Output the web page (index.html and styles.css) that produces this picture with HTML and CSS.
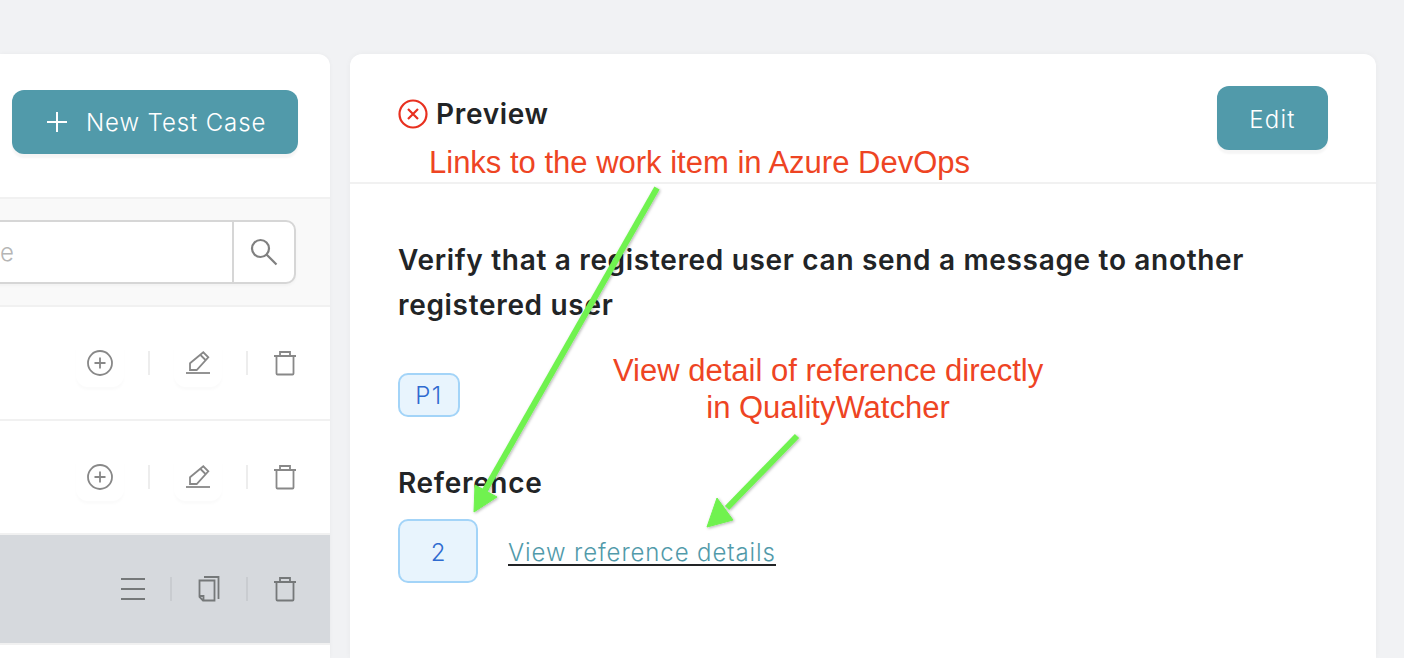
FILE: index.html
```html
<!DOCTYPE html>
<html lang="en">
<head>
    <meta charset="UTF-8">
    <meta name="viewport" content="width=device-width, initial-scale=1.0">
    <title>Test Cases</title>
    <link rel="stylesheet" href="styles.css">
</head>
<body>
    <div class="page">
        <!-- Test case list -->
        <section class="list-panel">
            <div class="list-head">
                <button class="btn-new">
                    <svg width="20" height="20" viewBox="0 0 20 20"><path d="M10 0v20M0 10h20" stroke="#fff" stroke-width="2" fill="none"/></svg>
                    <span>New Test Case</span>
                </button>
            </div>
            <div class="search-row">
                <div class="search-box">
                    <input class="search-input" type="text" placeholder="Search by name">
                    <div class="search-btn">
                        <svg width="28" height="28" viewBox="0 0 28 28" fill="none" stroke="#808080" stroke-width="2.2"><circle cx="10.500" cy="10.500" r="8.500"/><path d="M16.500 16.500l10 10"/></svg>
                    </div>
                </div>
            </div>
            <div class="case-row">
                <div class="act act-wide">
                    <svg width="26" height="26" viewBox="0 0 26 26" fill="none" stroke="#888" stroke-width="1.800"><circle cx="13" cy="13" r="12"/><path d="M13 7.500v11M7.500 13h11"/></svg>
                </div>
                <i class="sep"></i>
                <div class="act act-wide">
                    <svg width="24" height="26" viewBox="0 0 24 26" fill="none" stroke="#888" stroke-width="1.800"><path d="M0 23h24"/><path d="M4 13.300L17.300 2.300l5 5L10.700 20H4z"/><path d="M14.500 5l5 5"/></svg>
                </div>
                <i class="sep"></i>
                <div class="act">
                    <svg width="24" height="26" viewBox="0 0 24 26" fill="none" stroke="#888" stroke-width="1.800"><path d="M1 6h22M7 6V2h10v4M3.500 6v17.500a1 1 0 0 0 1 1h15a1 1 0 0 0 1-1V6"/></svg>
                </div>
            </div>
            <div class="case-row">
                <div class="act act-wide">
                    <svg width="26" height="26" viewBox="0 0 26 26" fill="none" stroke="#888" stroke-width="1.800"><circle cx="13" cy="13" r="12"/><path d="M13 7.500v11M7.500 13h11"/></svg>
                </div>
                <i class="sep"></i>
                <div class="act act-wide">
                    <svg width="24" height="26" viewBox="0 0 24 26" fill="none" stroke="#888" stroke-width="1.800"><path d="M0 23h24"/><path d="M4 13.300L17.300 2.300l5 5L10.700 20H4z"/><path d="M14.500 5l5 5"/></svg>
                </div>
                <i class="sep"></i>
                <div class="act">
                    <svg width="24" height="26" viewBox="0 0 24 26" fill="none" stroke="#888" stroke-width="1.800"><path d="M1 6h22M7 6V2h10v4M3.500 6v17.500a1 1 0 0 0 1 1h15a1 1 0 0 0 1-1V6"/></svg>
                </div>
            </div>
            <div class="case-row case-active">
                <div class="act">
                    <svg width="24" height="24" viewBox="0 0 24 24" fill="none" stroke="#757879" stroke-width="2"><path d="M0 2h24M0 12h24M0 22h24"/></svg>
                </div>
                <i class="sep"></i>
                <div class="act">
                    <svg width="22" height="26" viewBox="0 0 22 26" fill="none" stroke="#757879" stroke-width="1.800"><path d="M6 1h14.500v22M16.500 4.500H1.500v16.500l3.500 3.500h11.500zM1.500 20h4v4"/></svg>
                </div>
                <i class="sep"></i>
                <div class="act">
                    <svg width="24" height="26" viewBox="0 0 24 26" fill="none" stroke="#757879" stroke-width="1.800"><path d="M1 6h22M7 6V2h10v4M3.500 6v17.500a1 1 0 0 0 1 1h15a1 1 0 0 0 1-1V6"/></svg>
                </div>
            </div>
        </section>

        <!-- Preview -->
        <section class="preview-panel">
            <div class="preview-head">
                <div class="preview-title">
                    <svg width="30" height="30" viewBox="0 0 30 30" fill="none" stroke="#e8301f" stroke-width="2.200"><circle cx="15" cy="15" r="13.500"/><path d="M10 10l10 10M20 10L10 20"/></svg>
                    <h2>Preview</h2>
                </div>
                <button class="btn-edit">Edit</button>
            </div>
            <div class="preview-body">
                <p class="case-title">Verify that a registered user can send a message to another registered user</p>
                <span class="badge">P1</span>
                <h3>Reference</h3>
                <div class="ref-row">
                    <span class="ref-num">2</span>
                    <a class="ref-link" href="#">View reference details</a>
                </div>
            </div>
        </section>
    </div>

    <!-- Annotations drawn over the screenshot -->
    <div class="note note-links">Links to the work item in Azure DevOps</div>
    <div class="note note-detail">View detail of reference directly<br>in QualityWatcher</div>
    <svg class="arrows" width="1404" height="658" viewBox="0 0 1404 658">
        <defs>
            <filter id="arrowShadow" x="-20%" y="-20%" width="140%" height="140%">
                <feDropShadow dx="1" dy="1" stdDeviation="1.500" flood-color="#000" flood-opacity="0.300"/>
            </filter>
        </defs>
        <g fill="#70f24f" stroke="#70f24f" filter="url(#arrowShadow)">
            <path d="M657 188L484 492" stroke-width="6" fill="none"/>
            <path d="M474 512l1-27 22 12z" stroke-width="1"/>
            <path d="M797 436l-70 72" stroke-width="6" fill="none"/>
            <path d="M707 527l10-29 16 22z" stroke-width="1"/>
        </g>
    </svg>
</body>
</html>
```

FILE: styles.css
```css
* {
    box-sizing: border-box;
}

body {
    margin: 0;
    height: 658px;
    overflow: hidden;
    background-color: #f1f2f4;
    font-family: 'Inter', sans-serif;
    color: #222426;
}

.page {
    display: flex;
    gap: 20px;
    height: 658px;
    padding: 54px 28px 0 0;
}

.list-panel {
    flex: 0 0 330px;
    background-color: #fff;
    border-top-right-radius: 12px;
    box-shadow: 0 0 4px rgba(0, 0, 0, 0.04);
    overflow: hidden;
}

.list-head {
    display: flex;
    justify-content: flex-end;
    align-items: center;
    height: 145px;
    padding: 0 32px 7px 0;
    border-bottom: 2px solid #f1f1f1;
}

.btn-new {
    display: flex;
    align-items: center;
    gap: 19px;
    width: 286px;
    height: 64px;
    padding: 0 0 0 35px;
    border: none;
    border-radius: 12px;
    background-color: #519aaa;
    box-shadow: 0 4px 2px rgba(0, 0, 0, 0.04);
    color: #fff;
    font-family: inherit;
    font-size: 24px;
    font-weight: 300;
    letter-spacing: 0.9px;
}

.search-row {
    display: flex;
    justify-content: flex-end;
    align-items: center;
    height: 108px;
    padding-right: 34px;
    background-color: #f9f9f9;
    border-bottom: 2px solid #f1f1f1;
}

.search-box {
    display: flex;
    flex: none;
    width: 600px;
    height: 64px;
    background-color: #fff;
    border: 2px solid #d6d6d6;
    border-radius: 10px;
    box-shadow: 0 2px 3px rgba(0, 0, 0, 0.03);
}

.search-input {
    flex: 1;
    min-width: 0;
    padding: 0 218px 0 0;
    border: none;
    outline: none;
    background: transparent;
    text-align: right;
    font-family: inherit;
    font-size: 24px;
    font-weight: 300;
}

.search-input::placeholder {
    color: #b5b5b5;
}

.search-btn {
    display: flex;
    align-items: center;
    justify-content: center;
    flex: none;
    width: 62px;
    border-left: 2px solid #d6d6d6;
}

.case-row {
    display: flex;
    justify-content: flex-end;
    align-items: center;
    gap: 24px;
    height: 114px;
    padding: 0 32px 0 0;
    border-bottom: 2px solid #f1f1f1;
}

.case-active {
    height: 110px;
    background-color: #d6d9dd;
}

.act {
    display: flex;
    align-items: center;
    justify-content: center;
    width: 26px;
    height: 48px;
}

.act-wide {
    width: 48px;
    border-radius: 12px;
    box-shadow: 0 3px 3px rgba(0, 0, 0, 0.02);
}

.sep {
    width: 2px;
    height: 24px;
    background-color: #ededed;
}

.case-active .sep {
    background-color: #c9ccd0;
}

.preview-panel {
    flex: 1;
    background-color: #fff;
    border-radius: 12px 12px 0 0;
    box-shadow: 0 0 6px rgba(0, 0, 0, 0.04);
}

.preview-head {
    display: flex;
    justify-content: space-between;
    align-items: flex-start;
    height: 130px;
    padding: 32px 48px 0;
    border-bottom: 2px solid #f1f1f1;
}

.preview-title {
    display: flex;
    align-items: center;
    gap: 8px;
    margin-top: 13px;
}

.preview-title h2 {
    margin: 0;
    font-size: 28px;
    line-height: 30px;
    font-weight: 600;
    letter-spacing: 0.68px;
}

.btn-edit {
    width: 111px;
    height: 64px;
    padding: 2px 0 0;
    border: none;
    border-radius: 12px;
    background-color: #519aaa;
    box-shadow: 0 4px 2px rgba(0, 0, 0, 0.04);
    color: #fff;
    font-family: inherit;
    font-size: 24px;
    font-weight: 300;
    letter-spacing: 1.2px;
}

.preview-body {
    padding: 54px 48px 0;
}

.case-title {
    margin: 0 0 45px;
    font-size: 28px;
    line-height: 45px;
    font-weight: 600;
    letter-spacing: 0.68px;
}

.badge {
    display: flex;
    align-items: center;
    justify-content: center;
    width: 62px;
    height: 44px;
    background-color: #e8f4fd;
    border: 2px solid #a3d4f8;
    border-radius: 10px;
    color: #2f6bd0;
    font-size: 24px;
    font-weight: 300;
    letter-spacing: 1.5px;
}

h3 {
    margin: 46px 0 16px;
    font-size: 28px;
    line-height: 40px;
    font-weight: 600;
    letter-spacing: 0.68px;
}

.ref-row {
    display: flex;
    align-items: center;
    gap: 30px;
}

.ref-num {
    display: flex;
    align-items: center;
    justify-content: center;
    width: 80px;
    height: 64px;
    padding-top: 2px;
    background-color: #e8f4fd;
    border: 2px solid #a3d4f8;
    border-radius: 10px;
    color: #2f6bd0;
    font-size: 24px;
    font-weight: 300;
}

.ref-link {
    margin-top: 4px;
    color: #519aaa;
    font-size: 24px;
    font-weight: 300;
    letter-spacing: 0.9px;
    line-height: 23px;
    text-decoration: none;
    border-bottom: 2px solid #222426;
}

.note {
    position: absolute;
    color: #ee4423;
    font-family: 'Liberation Sans', sans-serif;
    font-size: 31px;
    line-height: 37px;
    white-space: nowrap;
}

.note-links {
    left: 429px;
    top: 144px;
}

.note-detail {
    left: 613px;
    top: 352px;
    width: 430px;
    text-align: center;
}

.arrows {
    position: absolute;
    left: 0;
    top: 0;
    pointer-events: none;
}
```
